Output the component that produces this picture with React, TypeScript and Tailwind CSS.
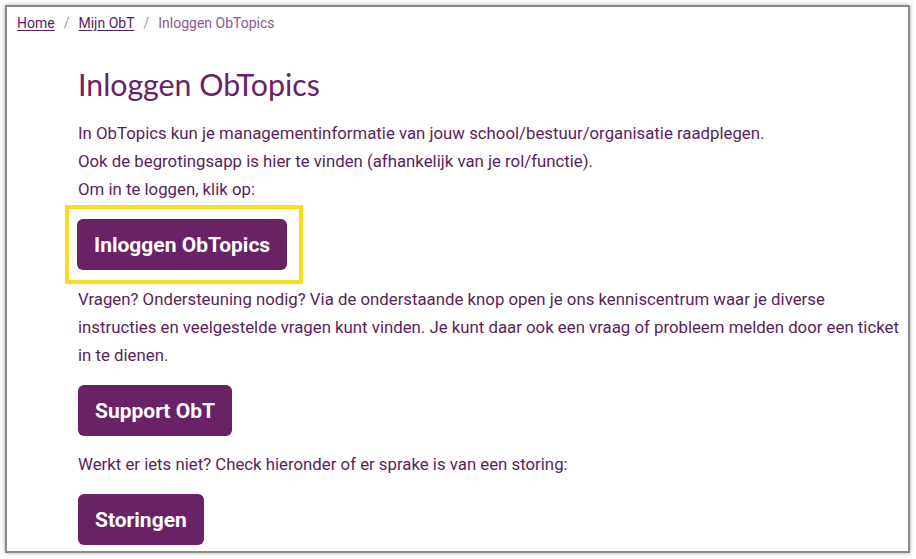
import React from "react";

const crumbs = [
  { label: "Home", href: "#" },
  { label: "Mijn ObT", href: "#" },
];

function Button({ children }: { children: React.ReactNode }) {
  return (
    <a
      href="#"
      className="inline-flex h-[51px] items-center rounded-[6px] bg-[#692266] px-[17px] text-[21px] font-bold text-white no-underline"
    >
      {children}
    </a>
  );
}

export default function App() {
  return (
    <div className="h-[559px] w-[916px] overflow-hidden bg-white p-[5px] pr-[6px] font-['Roboto',sans-serif]">
      <div className="h-[548px] overflow-hidden border-2 border-[#8a8a8a] bg-white shadow-[0_0_4px_rgba(0,0,0,0.35)]">
        {/* Breadcrumb */}
        <nav className="flex items-center pl-[10px] pt-[6px] text-[14px] leading-[20px]">
          {crumbs.map((c) => (
            <span key={c.label} className="flex items-center">
              <a href={c.href} className="text-[#5a1e5c] underline underline-offset-2">
                {c.label}
              </a>
              <span className="mx-[9px] text-[#9a9a9a]">/</span>
            </span>
          ))}
          <span className="text-[#8b5a8d]">Inloggen ObTopics</span>
        </nav>

        <main className="pl-[71px] pr-[3px] text-[16.8px] leading-[28px] text-[#5a1e5c]">
          <h1 className="mt-[31px] font-['Lato',sans-serif] text-[30.3px] leading-[40px] font-normal text-[#692266]">
            Inloggen ObTopics
          </h1>

          <p className="mt-[15px]">
            In ObTopics kun je managementinformatie van jouw school/bestuur/organisatie raadplegen.
            <br />
            Ook de begrotingsapp is hier te vinden (afhankelijk van je rol/functie).
            <br />
            Om in te loggen, klik op:
          </p>

          {/* highlighted login button */}
          <div className="-ml-[13px] mt-[2px] inline-block border-4 border-[#f9dc1c] pb-[10px] pl-[8px] pr-[12px] pt-[10px]">
            <Button>Inloggen ObTopics</Button>
          </div>

          <p className="mt-[1px]">
            Vragen? Ondersteuning nodig? Via de onderstaande knop open je ons kenniscentrum waar je diverse
            instructies en veelgestelde vragen kunt vinden. Je kunt daar ook een vraag of probleem melden door
            een ticket in te dienen.
          </p>

          <div className="mt-[16px]">
            <Button>Support ObT</Button>
          </div>

          <p className="mt-[14px]">Werkt er iets niet? Check hieronder of er sprake is van een storing:</p>

          <div className="mt-[16px]">
            <Button>Storingen</Button>
          </div>
        </main>
      </div>
    </div>
  );
}
